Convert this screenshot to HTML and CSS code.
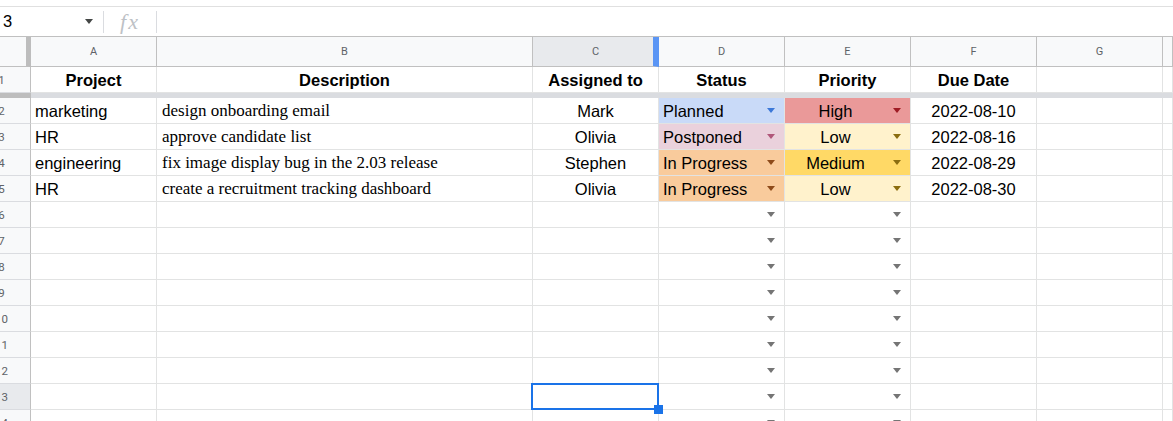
FILE: index.html
```html
<!DOCTYPE html>
<html>
<head>
    <title>Project Tracker - Sheet</title>
    <link rel="stylesheet" href="styles.css">
</head>
<body>
    <div class="toolbar-edge"></div>

    <!-- Formula bar -->
    <div class="formula-bar">
        <div class="namebox">
            <span>3</span>
            <span class="namebox-arrow"></span>
        </div>
        <div class="sep"></div>
        <div class="fx">fx</div>
        <div class="sep"></div>
        <div class="formula-input"></div>
    </div>

    <!-- Sheet grid -->
    <div class="grid">
        <!-- column headers -->
        <div class="col-head corner"></div>
        <div class="col-head">A</div>
        <div class="col-head">B</div>
        <div class="col-head active">C</div>
        <div class="col-head">D</div>
        <div class="col-head">E</div>
        <div class="col-head">F</div>
        <div class="col-head">G</div>
        <div class="col-head"></div>

        <!-- row 1 -->
        <div class="row-head"><span>1</span></div>
        <div class="cell title">Project</div>
        <div class="cell title">Description</div>
        <div class="cell title">Assigned to</div>
        <div class="cell title">Status</div>
        <div class="cell title">Priority</div>
        <div class="cell title">Due Date</div>
        <div class="cell"></div>
        <div class="cell"></div>

        <!-- frozen row divider -->
        <div class="freeze-corner"></div>
        <div class="freeze-bar"></div>

        <!-- row 2 -->
        <div class="row-head"><span>2</span></div>
        <div class="cell">marketing</div>
        <div class="cell serif">design onboarding email</div>
        <div class="cell center">Mark</div>
        <div class="cell chip planned"><span class="val">Planned</span><span class="arrow"></span></div>
        <div class="cell chip mid high"><span class="val">High</span><span class="arrow"></span></div>
        <div class="cell center">2022-08-10</div>
        <div class="cell"></div>
        <div class="cell"></div>

        <!-- row 3 -->
        <div class="row-head"><span>3</span></div>
        <div class="cell">HR</div>
        <div class="cell serif">approve candidate list</div>
        <div class="cell center">Olivia</div>
        <div class="cell chip postponed"><span class="val">Postponed</span><span class="arrow"></span></div>
        <div class="cell chip mid low"><span class="val">Low</span><span class="arrow"></span></div>
        <div class="cell center">2022-08-16</div>
        <div class="cell"></div>
        <div class="cell"></div>

        <!-- row 4 -->
        <div class="row-head"><span>4</span></div>
        <div class="cell">engineering</div>
        <div class="cell serif">fix image display bug in the 2.03 release</div>
        <div class="cell center">Stephen</div>
        <div class="cell chip progress"><span class="val">In Progress</span><span class="arrow"></span></div>
        <div class="cell chip mid medium"><span class="val">Medium</span><span class="arrow"></span></div>
        <div class="cell center">2022-08-29</div>
        <div class="cell"></div>
        <div class="cell"></div>

        <!-- row 5 -->
        <div class="row-head"><span>5</span></div>
        <div class="cell">HR</div>
        <div class="cell serif">create a recruitment tracking dashboard</div>
        <div class="cell center">Olivia</div>
        <div class="cell chip progress"><span class="val">In Progress</span><span class="arrow"></span></div>
        <div class="cell chip mid low"><span class="val">Low</span><span class="arrow"></span></div>
        <div class="cell center">2022-08-30</div>
        <div class="cell"></div>
        <div class="cell"></div>

        <!-- empty rows with dropdowns -->
        <div class="row-head"><span>6</span></div>
        <div class="cell"></div><div class="cell"></div><div class="cell"></div>
        <div class="cell chip"><span class="val"></span><span class="arrow"></span></div>
        <div class="cell chip"><span class="val"></span><span class="arrow"></span></div>
        <div class="cell"></div><div class="cell"></div><div class="cell"></div>

        <div class="row-head"><span>7</span></div>
        <div class="cell"></div><div class="cell"></div><div class="cell"></div>
        <div class="cell chip"><span class="val"></span><span class="arrow"></span></div>
        <div class="cell chip"><span class="val"></span><span class="arrow"></span></div>
        <div class="cell"></div><div class="cell"></div><div class="cell"></div>

        <div class="row-head"><span>8</span></div>
        <div class="cell"></div><div class="cell"></div><div class="cell"></div>
        <div class="cell chip"><span class="val"></span><span class="arrow"></span></div>
        <div class="cell chip"><span class="val"></span><span class="arrow"></span></div>
        <div class="cell"></div><div class="cell"></div><div class="cell"></div>

        <div class="row-head"><span>9</span></div>
        <div class="cell"></div><div class="cell"></div><div class="cell"></div>
        <div class="cell chip"><span class="val"></span><span class="arrow"></span></div>
        <div class="cell chip"><span class="val"></span><span class="arrow"></span></div>
        <div class="cell"></div><div class="cell"></div><div class="cell"></div>

        <div class="row-head"><span>10</span></div>
        <div class="cell"></div><div class="cell"></div><div class="cell"></div>
        <div class="cell chip"><span class="val"></span><span class="arrow"></span></div>
        <div class="cell chip"><span class="val"></span><span class="arrow"></span></div>
        <div class="cell"></div><div class="cell"></div><div class="cell"></div>

        <div class="row-head"><span>11</span></div>
        <div class="cell"></div><div class="cell"></div><div class="cell"></div>
        <div class="cell chip"><span class="val"></span><span class="arrow"></span></div>
        <div class="cell chip"><span class="val"></span><span class="arrow"></span></div>
        <div class="cell"></div><div class="cell"></div><div class="cell"></div>

        <div class="row-head"><span>12</span></div>
        <div class="cell"></div><div class="cell"></div><div class="cell"></div>
        <div class="cell chip"><span class="val"></span><span class="arrow"></span></div>
        <div class="cell chip"><span class="val"></span><span class="arrow"></span></div>
        <div class="cell"></div><div class="cell"></div><div class="cell"></div>

        <div class="row-head active"><span>13</span></div>
        <div class="cell"></div><div class="cell"></div>
        <div class="cell selected"><div class="sel-box"><div class="sel-handle"></div></div></div>
        <div class="cell chip"><span class="val"></span><span class="arrow"></span></div>
        <div class="cell chip"><span class="val"></span><span class="arrow"></span></div>
        <div class="cell"></div><div class="cell"></div><div class="cell"></div>

        <div class="row-head"><span>14</span></div>
        <div class="cell"></div><div class="cell"></div><div class="cell"></div>
        <div class="cell chip"><span class="val"></span><span class="arrow"></span></div>
        <div class="cell chip"><span class="val"></span><span class="arrow"></span></div>
        <div class="cell"></div><div class="cell"></div><div class="cell"></div>
    </div>
</body>
</html>
```

FILE: styles.css
```css
* {
    box-sizing: border-box;
}
html, body {
    margin: 0;
    padding: 0;
    background: #ffffff;
    overflow: hidden;
    height: 421px;
}
body {
    font-family: 'Liberation Sans', Arial, sans-serif;
    color: #000;
}
.toolbar-edge {
    height: 6px;
}

/* Formula bar */
.formula-bar {
    height: 31px;
    border-top: 1px solid #e0e0e0;
    border-bottom: 1px solid #c0c0c0;
    display: flex;
    align-items: center;
}
.namebox {
    width: 103px;
    height: 100%;
    display: flex;
    align-items: center;
    justify-content: space-between;
    padding: 0 10px 0 3px;
    font-size: 16.5px;
}
.namebox-arrow {
    width: 0;
    height: 0;
    border-left: 4.5px solid transparent;
    border-right: 4.5px solid transparent;
    border-top: 5px solid #444746;
}
.sep {
    width: 1px;
    height: 22px;
    background: #dadce0;
}
.fx {
    width: 52px;
    text-align: center;
    font-family: 'Liberation Serif', 'Times New Roman', serif;
    font-style: italic;
    font-size: 22px;
    letter-spacing: 2px;
    color: #bdc1c6;
}
.formula-input {
    flex: 1;
}

/* Grid */
.grid {
    display: grid;
    grid-template-columns: 31px 126px 376px 126px 126px 126px 126px 126px 1fr;
    grid-template-rows: 30px 26px 5px;
    grid-auto-rows: 26px;
}
.col-head {
    background: #f8f9fa;
    border-right: 1px solid #c0c0c0;
    border-bottom: 1px solid #c0c0c0;
    display: flex;
    align-items: center;
    justify-content: center;
    font-family: Roboto, 'Liberation Sans', sans-serif;
    font-size: 11px;
    color: #5f6368;
}
.col-head.corner {
    border-right: 5px solid #bdbdbd;
}
.col-head.active {
    background: #e8eaed;
    border-right: 6px solid #5a95f5;
    padding-left: 5px;
}
.row-head {
    background: #f8f9fa;
    border-right: 1px solid #c0c0c0;
    border-bottom: 1px solid #dadce0;
    overflow: hidden;
    display: flex;
    align-items: center;
    font-family: Roboto, 'Liberation Sans', sans-serif;
    font-size: 11.5px;
    color: #5f6368;
}
.row-head span {
    flex: none;
    width: 59px;
    margin-left: -28px;
    text-align: center;
}
.row-head.active {
    background: #e8eaed;
}
.freeze-corner {
    background: #bdbdbd;
}
.freeze-bar {
    grid-column: 2 / -1;
    background: #dadce0;
}

/* Cells */
.cell {
    border-right: 1px solid #e2e3e3;
    border-bottom: 1px solid #e2e3e3;
    display: flex;
    align-items: flex-end;
    padding: 0 4px 2px 4px;
    font-size: 16.5px;
    line-height: 20px;
    white-space: nowrap;
    overflow: hidden;
}
.cell.title {
    font-weight: bold;
    justify-content: center;
    padding-bottom: 2px;
}
.cell.center {
    justify-content: center;
}
.cell.serif {
    font-family: 'Liberation Serif', 'Times New Roman', serif;
    font-size: 17px;
    padding-left: 5px;
}

/* Dropdown chips */
.chip {
    padding-right: 0;
}
.chip .val {
    flex: 1;
}
.chip.mid .val {
    text-align: center;
    margin-left: -4px;
}
.chip .arrow {
    flex: none;
    align-self: center;
    width: 0;
    height: 0;
    margin: 1px 9px 0 7px;
    border-left: 4.5px solid transparent;
    border-right: 4.5px solid transparent;
    border-top: 5px solid #757575;
}
.planned {
    background: #c9daf8;
}
.planned .arrow {
    border-top-color: #3c78d8;
}
.postponed {
    background: #ead1dc;
}
.postponed .arrow {
    border-top-color: #b0577a;
}
.progress {
    background: #f9cb9c;
}
.progress .arrow {
    border-top-color: #8e4b1a;
}
.high {
    background: #ea9999;
}
.high .arrow {
    border-top-color: #9e1b24;
}
.low {
    background: #fff2cc;
}
.low .arrow {
    border-top-color: #8b6d10;
}
.medium {
    background: #ffd966;
}
.medium .arrow {
    border-top-color: #8b6d10;
}

/* Selected cell */
.cell.selected {
    position: relative;
    overflow: visible;
}
.sel-box {
    position: absolute;
    top: -1px;
    left: -2px;
    right: -1px;
    bottom: -1px;
    border: 2px solid #1a73e8;
    z-index: 2;
}
.sel-handle {
    position: absolute;
    right: -6px;
    bottom: -6px;
    width: 9px;
    height: 9px;
    background: #1a73e8;
}
```
